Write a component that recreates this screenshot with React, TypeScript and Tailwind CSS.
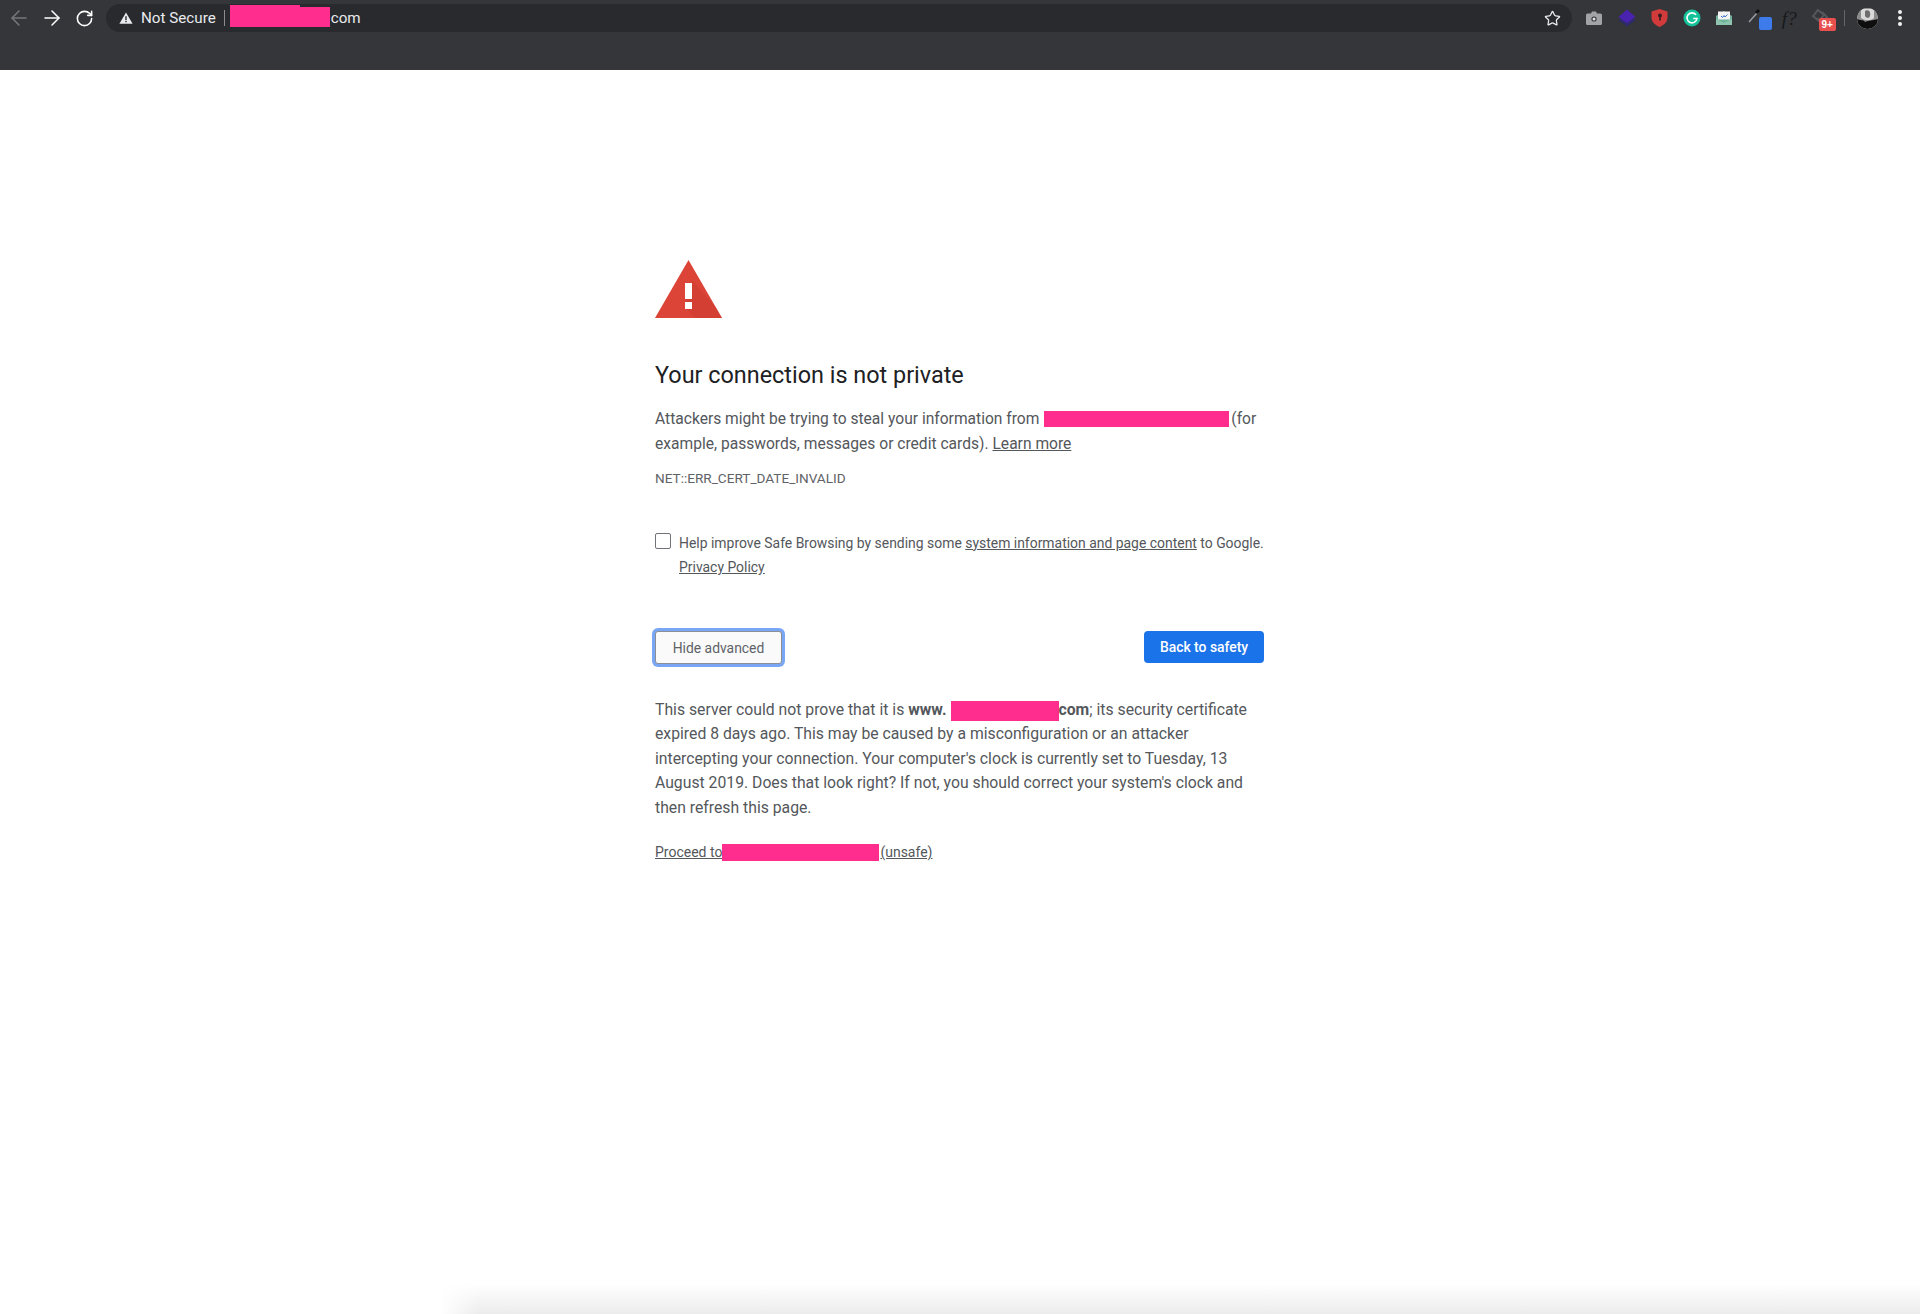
import React from "react";
import { ArrowLeft, ArrowRight, RotateCw, Star } from "lucide-react";

const PINK = "bg-[#ff2e8e]";

function Redact({ className }: { className: string }) {
  return <span className={`inline-block ${PINK} ${className}`} />;
}

function NavButton({ children }: { children: React.ReactNode }) {
  return <div className="flex h-9 w-[33px] items-center justify-center">{children}</div>;
}

function Ext({ children }: { children: React.ReactNode }) {
  return <div className="flex h-9 w-[32.5px] items-center justify-center">{children}</div>;
}

function Toolbar() {
  return (
    <header className="h-[70px] bg-[#35363a]">
      <div className="flex h-9 items-center pl-[2px] pr-[6px]">
        <NavButton>
          <ArrowLeft size={24} strokeWidth={1.5} className="text-[#75777b]" />
        </NavButton>
        <NavButton>
          <ArrowRight size={24} strokeWidth={1.5} className="text-white" />
        </NavButton>
        <NavButton>
          <RotateCw size={19} strokeWidth={2} className="text-white" />
        </NavButton>

        {/* omnibox */}
        <div className="ml-[5px] flex h-7 flex-1 items-center rounded-full bg-[#292a2d] pl-3 text-[15.200px] text-[#e8eaed]">
          <svg width="14" height="12" viewBox="0 0 14 12" className="ml-[1px]">
            <path d="M7 0.5 13.6 11.8H.4Z" fill="#e8eaed" />
            <rect x="6.3" y="4.2" width="1.4" height="3.8" fill="#292a2d" />
            <rect x="6.3" y="8.8" width="1.4" height="1.4" fill="#292a2d" />
          </svg>
          <span className="ml-2 pt-px">Not Secure</span>
          <span className="ml-2 h-4 w-px bg-[#8a8c90]" />
          <div className="-mt-1 ml-[5px] flex h-[22px] w-[100px] flex-col items-start">
            <div className={`h-[2px] w-[70px] ${PINK}`} />
            <div className={`h-5 w-[100px] ${PINK}`} />
          </div>
          <span className="ml-px pt-px">com</span>
          <div className="flex-1" />
          <Star size={17} strokeWidth={1.8} className="mr-[11px] text-[#e8eaed]" />
        </div>

        {/* extensions */}
        <div className="ml-1.5 flex items-center">
          <Ext>
            <svg width="16" height="14" viewBox="0 0 16 14">
              <path d="M1.5 2.5H5L6 .5h4l1 2h3.5A1.5 1.5 0 0 1 16 4v8.500a1.500 1.500 0 0 1-1.500 1.500h-13A1.500 1.500 0 0 1 0 12.500V4a1.500 1.500 0 0 1 1.500-1.500Z" fill="#a1a3a6" />
              <circle cx="8" cy="8" r="2.600" fill="#35363a" />
              <circle cx="8" cy="8" r="1.500" fill="#e0e0e0" />
            </svg>
          </Ext>
          <Ext>
            <svg width="18" height="18" viewBox="0 0 18 18">
              <path d="M9 5 17.500 11 9 17.500.5 11Z" fill="#2d2a6e" />
              <path d="M9 .5 17.500 8 9 14 .5 8Z" fill="#4a22b0" />
            </svg>
          </Ext>
          <Ext>
            <svg width="17" height="18" viewBox="0 0 17 18">
              <path d="M8.500 0 16.500 2.500V8.500C16.500 13 13 16 8.500 18 4 16 .5 13 .5 8.500V2.500Z" fill="#d23b3b" />
              <circle cx="9" cy="6.500" r="2" fill="#3a1d20" />
              <rect x="8.200" y="7" width="1.600" height="4.500" fill="#3a1d20" />
            </svg>
          </Ext>
          <Ext>
            <svg width="18" height="18" viewBox="0 0 18 18">
              <circle cx="9" cy="9" r="8.500" fill="#15c39a" />
              <path d="M13 5.800A5 5 0 1 0 14 9.500H10.200" fill="none" stroke="#fff" strokeWidth="1.600" />
            </svg>
          </Ext>
          <Ext>
            <svg width="18" height="16" viewBox="0 0 18 16">
              <path d="M1 6 9 1 17 6V15H1Z" fill="#6fb39a" />
              <rect x="3" y="1.500" width="12" height="8" fill="#f4f4f4" />
              <path d="M6 6 7.500 7.500 9 5.500 10 7 12.500 4.500" fill="none" stroke="#3b6fd8" strokeWidth="1" />
              <path d="M1 9 9 13 17 9V15H1Z" fill="#8cc4ae" />
            </svg>
          </Ext>
          <Ext>
            <div className="relative h-5 w-5">
              <svg width="14" height="16" viewBox="0 0 14 16" className="absolute left-[1px] top-0">
                <path d="M1 14 9 5" stroke="#9aa0a6" strokeWidth="1.400" />
                <path d="M8 5 11 2" stroke="#111" strokeWidth="3" />
              </svg>
              <div className="absolute left-[12px] top-[9px] h-[13px] w-[13px] rounded-[2px] bg-[#3d7bea]" />
            </div>
          </Ext>
          <Ext>
            <span className="font-['Liberation_Serif',serif] text-[19px] italic leading-none text-[#17181a]">f?</span>
          </Ext>
          <Ext>
            <div className="relative h-5 w-5">
              <svg width="18" height="18" viewBox="0 0 18 18" className="absolute -left-px top-0">
                <path d="M7 2 13 7 8 13 2 8Z" fill="none" stroke="#53565a" strokeWidth="2" />
                <path d="M11 4 16 9 11 15 6 10" fill="none" stroke="#53565a" strokeWidth="2" />
              </svg>
              <div className="absolute left-[7px] top-[10px] flex h-[13px] w-[17px] items-center justify-center rounded-[2px] bg-[#e8504f] font-['Liberation_Sans',sans-serif] text-[10px] font-bold leading-none text-white">
                9+
              </div>
            </div>
          </Ext>
        </div>
        <div className="ml-1.5 h-4 w-px bg-[#63656a]" />
        <div className="ml-[6px] flex h-9 w-8 items-center justify-center">
          <div className="h-[21px] w-[21px] overflow-hidden rounded-full bg-[#d8d8d8]">
            <svg width="21" height="21" viewBox="0 0 21 21">
              <rect width="21" height="21" fill="#8a8a8a" />
              <path d="M4 1H17V10C14 13 8 13 4 10Z" fill="#d9d9d9" />
              <path d="M0 11C4 13 6 11 8 14 12 12 15 13 21 11V21H0Z" fill="#0e0e0e" />
              <path d="M8 3C11 1 14 3 13 8 12 11 9 10 8 8Z" fill="#6d6d6d" />
            </svg>
          </div>
        </div>
        <div className="ml-[3px] flex h-9 w-7 flex-col items-center justify-center gap-[2.500px]">
          <span className="h-[3.500px] w-[3.500px] rounded-full bg-[#f1f1f1]" />
          <span className="h-[3.500px] w-[3.500px] rounded-full bg-[#f1f1f1]" />
          <span className="h-[3.500px] w-[3.500px] rounded-full bg-[#f1f1f1]" />
        </div>
      </div>
    </header>
  );
}

function WarningIcon() {
  return (
    <svg width="67" height="58" viewBox="0 0 67 58" className="block">
      <path d="M33.500 0 67 58H0Z" fill="#db4437" />
      <path d="M37 20 60.500 47 67 58H40L30 47Z" fill="#c93a2e" opacity="0.45" />
      <rect x="30" y="23" width="7" height="16" fill="#fff" />
      <rect x="30" y="42" width="7" height="7" fill="#fff" />
    </svg>
  );
}

export default function App() {
  return (
    <div className="flex min-h-[1314px] flex-col bg-white font-['Roboto',sans-serif]">
      <Toolbar />
      <main className="flex-1">
        <div className="mx-auto w-[610px] pt-[190px] text-[15.600px] leading-[24.500px] text-[#54575b]">
          <WarningIcon />

          <h1 className="mt-[39px] text-[23.400px] font-normal leading-[36px] text-[#202124]">
            Your connection is not private
          </h1>

          <p className="mt-[14px]">
            Attackers might be trying to steal your information from{" "}
            <Redact className="ml-px h-[16px] w-[185px] align-[-3px]" />
            <span className="ml-[2px]">(for</span> example, passwords, messages or credit cards).{" "}
            <a className="underline">Learn more</a>
          </p>

          <div className="mt-[10px] text-[13.600px] text-[#5f6368]">NET::ERR_CERT_DATE_INVALID</div>

          {/* checkbox row */}
          <div className="mt-[42px] flex text-[13.930px]">
            <div className="h-[16px] w-[16px] shrink-0 rounded-[2px] border border-[#6f7276] bg-white" />
            <p className="-mt-[2px] ml-2 whitespace-nowrap">
              Help improve Safe Browsing by sending some <a className="underline">system information and page content</a> to
              Google.
              <br />
              <a className="underline">Privacy Policy</a>
            </p>
          </div>

          {/* buttons */}
          <div className="mt-[51px] flex items-start justify-between">
            <button className="h-[33px] w-[127px] rounded-[3px] border border-[#8b8e92] bg-[#fafafa] pt-[3px] text-[13.900px] leading-none text-[#5f6368] ring-[3px] ring-[#7aa7f5]">
              Hide advanced
            </button>
            <button className="mr-px h-[32px] w-[120px] rounded-[4px] bg-[#1a73e8] pt-[2px] text-[13.900px] font-medium leading-none text-white">
              Back to safety
            </button>
          </div>

          <p className="mt-[34px] text-[15.750px]">
            This server could not prove that it is <b className="font-bold">www.</b>
            <Redact className="ml-1 h-[20px] w-[108px] align-[-6px]" />
            <b className="font-bold">com</b>; its security certificate expired 8 days ago. This may be caused by a
            misconfiguration or an attacker intercepting your connection. Your computer's clock is currently set to
            Tuesday, 13 August 2019. Does that look right? If not, you should correct your system's clock and then refresh
            this page.
          </p>

          <div className="mt-[20px] text-[14px]">
            <a className="underline">Proceed to</a>
            <Redact className="h-[17px] w-[157px] align-[-4px]" />
            <a className="ml-[1px] underline">(unsafe)</a>
          </div>
        </div>
      </main>
      {/* faint shadow at the bottom edge */}
      <div className="relative ml-[440px] h-[30px] bg-gradient-to-b from-white to-[#ececec]">
        <div className="absolute inset-y-0 left-0 w-[40px] bg-gradient-to-r from-white to-transparent" />
      </div>
    </div>
  );
}
